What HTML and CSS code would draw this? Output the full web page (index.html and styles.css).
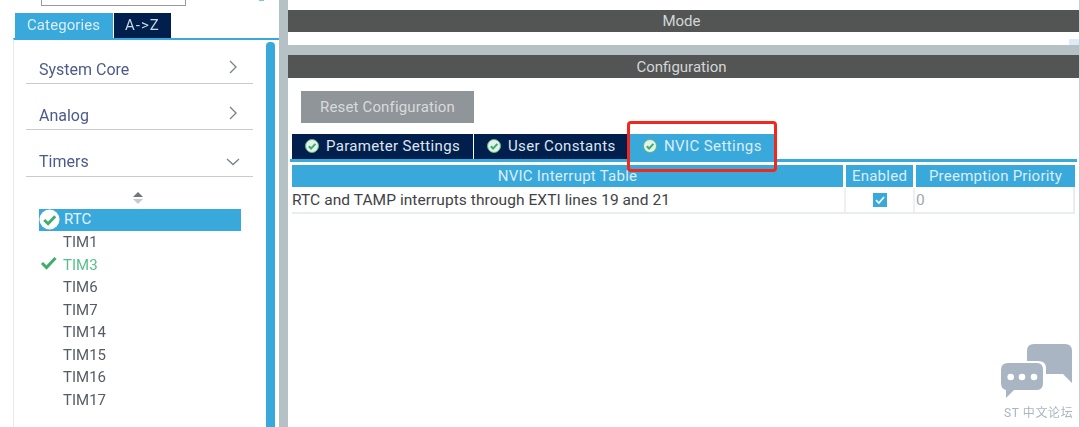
FILE: index.html
```html
<!DOCTYPE html>
<html lang="en">
<head>
<meta charset="utf-8">
<title>NVIC Settings</title>
<link rel="stylesheet" href="styles.css">
</head>
<body>
<div class="app">
  <aside class="left">
    <div class="search-row"><div class="search"></div><div class="search-dot"></div></div>
    <div class="cat-tabs">
      <div class="cat-tab active">Categories</div>
      <div class="cat-tab az">A-&gt;Z</div>
    </div>
    <div class="cat-body">
      <div class="cat-list">
        <div class="cat"><span>System Core</span><svg class="chev" width="12" height="14" viewBox="0 0 12 14"><path d="M3 1 9 7 3 13" /></svg></div>
        <div class="cat"><span>Analog</span><svg class="chev" width="12" height="14" viewBox="0 0 12 14"><path d="M3 1 9 7 3 13" /></svg></div>
        <div class="cat"><span>Timers</span><svg class="chev down" width="14" height="12" viewBox="0 0 14 12"><path d="M1 3 7 8.5 13 3" /></svg></div>
        <div class="sort"><svg width="10" height="15" viewBox="0 0 10 15"><path class="up" d="M5 1 10 6H0z"/><path class="dn" d="M0 8H10L5 13z"/></svg></div>
        <ul class="items">
          <li class="item selected"><svg class="ic" width="21" height="21" viewBox="0 0 22 22"><circle cx="11" cy="11" r="10.5" fill="#fff"/><path d="M5.5 11.5 9.5 15.5 17 7.5" fill="none" stroke="#3fae6b" stroke-width="3"/></svg><span>RTC</span></li>
          <li class="item">TIM1</li>
          <li class="item ok"><svg class="ic" width="18" height="14" viewBox="0 0 18 14"><path d="M2 7 6.5 11.5 15.5 2" fill="none" stroke="#3fae6b" stroke-width="3"/></svg><span>TIM3</span></li>
          <li class="item">TIM6</li>
          <li class="item">TIM7</li>
          <li class="item">TIM14</li>
          <li class="item">TIM15</li>
          <li class="item">TIM16</li>
          <li class="item">TIM17</li>
        </ul>
      </div>
      <div class="scroll"></div>
    </div>
  </aside>
  <main class="right">
    <div class="mode-wrap">
      <div class="bar mode">Mode</div>
      <div class="chip"></div>
    </div>
    <div class="config">
      <div class="bar">Configuration</div>
      <button class="reset">Reset Configuration</button>
      <div class="tabs">
        <div class="tab param"><svg class="tick" width="14" height="14" viewBox="0 0 14 14"><circle cx="7" cy="7" r="6.5" fill="#e4f2ea"/><circle cx="7" cy="7" r="6.5" fill="none" stroke="#58b780" stroke-width="1"/><path d="M3.8 7.2 6.1 9.5 10.4 4.9" fill="none" stroke="#3fae6b" stroke-width="2"/></svg><span>Parameter Settings</span></div>
        <div class="tab user"><svg class="tick" width="14" height="14" viewBox="0 0 14 14"><circle cx="7" cy="7" r="6.5" fill="#e4f2ea"/><circle cx="7" cy="7" r="6.5" fill="none" stroke="#58b780" stroke-width="1"/><path d="M3.8 7.2 6.1 9.5 10.4 4.9" fill="none" stroke="#3fae6b" stroke-width="2"/></svg><span>User Constants</span></div>
        <div class="tab nvic"><svg class="tick" width="14" height="14" viewBox="0 0 14 14"><circle cx="7" cy="7" r="6.5" fill="#e4f2ea"/><circle cx="7" cy="7" r="6.5" fill="none" stroke="#58b780" stroke-width="1"/><path d="M3.8 7.2 6.1 9.5 10.4 4.9" fill="none" stroke="#3fae6b" stroke-width="2"/></svg><span>NVIC Settings</span></div>
      </div>
      <div class="table">
        <div class="th c1">NVIC Interrupt Table</div>
        <div class="th c2">Enabled</div>
        <div class="th c3">Preemption Priority</div>
        <div class="td c1">RTC and TAMP interrupts through EXTI lines 19 and 21</div>
        <div class="td c2"><span class="check"><svg width="14" height="14" viewBox="0 0 14 14"><path d="M3 7.2 5.9 10 11 4" fill="none" stroke="#fff" stroke-width="1.6"/></svg></span></div>
        <div class="td c3 zero">0</div>
      </div>
    </div>
  </main>
</div>
<div class="highlight"></div>
<div class="mark">
  <svg width="74" height="56" viewBox="0 0 74 56">
    <path fill="#a9b5c3" d="M26 17V7Q26 0 33 0H64Q71 0 71 7V39L62 30H45V24Q45 17 37 17Z"/>
    <path fill="#a9b5c3" d="M7 19H36Q42 19 42 26V39Q42 46 36 46H13L5 54V46Q0 45 0 39V26Q0 19 7 19Z"/>
    <circle cx="9.7" cy="33" r="3.3" fill="#fff"/><circle cx="21" cy="33" r="3.3" fill="#fff"/><circle cx="33" cy="33" r="3.3" fill="#fff"/>
  </svg>
  <div class="mark-text">ST 中文论坛</div>
</div>
</body>
</html>
```
FILE: styles.css
```css
* { box-sizing: border-box; }
html, body { margin: 0; height: 100%; }
body { width: 1080px; height: 427px; overflow: hidden; background: #fff; position: relative; font-family: Roboto, "Liberation Sans", "Noto Sans CJK SC", sans-serif; }
.app { display: flex; height: 427px; }
.app, .highlight, .mark { filter: blur(.4px); }

.left { width: 279px; flex: none; padding-left: 13px; }
.search-row { height: 13px; padding-left: 28px; display: flex; }
.search { width: 145px; height: 6px; border: 1px solid #9a9a9a; border-top: 0; background: #fff; }
.search-dot { width: 5px; height: 1px; margin-left: 73px; background: #7fc4e6; }
.cat-tabs { display: flex; height: 25px; padding-left: 2px; gap: 1px; }
.cat-tab { background: #001f4d; color: #c9d6e4; font-size: 15px; padding: 3px 11px 0; width: 57px; white-space: nowrap; }
.cat-tab.active { background: #39a9dc; color: #dcedf7; width: 98px; letter-spacing: .1px; padding-left: 12px; }
.cat-tab.az { letter-spacing: 1px; }
.cat-body { display: flex; height: 389px; border-top: 2px solid #39a9dc; border-left: 1px solid #e6ebee; }
.cat-list { width: 251px; padding-left: 12px; flex: none; }
.cat { width: 227px; height: 47px; padding: 0 14px 0 13px; border-bottom: 1px solid #c6ccd2; display: flex; align-items: flex-end; justify-content: space-between; color: #4c5b8c; font-size: 16px; line-height: 20px; }
.cat span { padding-bottom: 4px; }
.cat:first-child { height: 44px; }
.cat:first-child span { padding-bottom: 3px; }
.cat:nth-child(2) { height: 46px; }
.cat:nth-child(2) span { padding-bottom: 3px; }
.chev { margin-bottom: 9px; }
.chev path { fill: none; stroke: #77828c; stroke-width: 1.3; }
.chev.down { margin-right: -1px; margin-bottom: 8px; }
.sort { height: 31.5px; padding: 14px 0 0 107px; width: 227px; }
.sort svg { display: block; }
.up { fill: #6f7679; }
.dn { fill: #c6cacc; }
.items { list-style: none; margin: 0; padding: 0 0 0 13px; width: 214px; }
.item { height: 22.5px; line-height: 22px; font-size: 15px; color: #565b66; padding-left: 24px; display: flex; align-items: center; position: relative; }
.item .ic { position: absolute; left: 1px; top: 2px; }
.item.selected { background: #39a9dc; color: #e6f3fa; width: 202px; height: 22.5px; padding: 0 0 1px 25px; }
.item.selected .ic { top: 0; left: 0; }
.item.ok { color: #56c08a; }
.scroll { width: 9px; margin: 2px 0 0 1px; background: #39a9dc; border-radius: 4px 4px 0 0; }

.right { flex: 1; display: flex; flex-direction: column; background: #b6c1c6; padding-left: 9px; border-right: 1px solid #c9cfd3; }
.mode-wrap { height: 45px; background: #fff; padding-top: 10px; }
.bar { height: 22px; padding-right: 4px; background: #535454; color: #d4d7d8; font-size: 15px; line-height: 24px; text-align: center; }
.bar.mode { line-height: 22px; }
.chip { width: 10px; height: 6px; margin: 7px 0 0 auto; background: #dcebf5; }
.config { margin-top: 10px; flex: 1; background: #fff; }
.config .bar { height: 23px; }
.reset { display: block; margin: 13px 0 0 13px; width: 173px; height: 32px; border: 0; background: #8f9599; color: #d8dbdd; font: 15px Roboto, "Liberation Sans", sans-serif; letter-spacing: .15px; }
.tabs { display: flex; margin: 11px 2px 0 2px; padding-left: 2px; height: 28px; border-bottom: 3px solid #39a9dc; gap: 1px; }
.tab { height: 25px; background: #001f4d; color: #dfe6ee; font-size: 15px; display: flex; align-items: center; white-space: nowrap; padding: 0 0 1px 13px; }
.tick { margin-right: 7px; flex: none; }
.tab.param { width: 181px; letter-spacing: .33px; }
.tab.user { width: 154px; letter-spacing: .36px; }
.tab.nvic { width: 145px; margin-left: 1px; background: #39a9dc; color: #dcedf7; letter-spacing: .4px; }
.table { display: grid; grid-template-columns: 551px 67px 159px; column-gap: 3px; margin: 3px 0 0 4px; width: 783px; border-bottom: 2px solid #e9edef; border-right: 2px solid #e9edef; }
.th { height: 22px; background: #39a9dc; color: #dcedf7; font-size: 15px; line-height: 23px; text-align: center; letter-spacing: .25px; }
.td { height: 24px; font-size: 15.5px; line-height: 24px; color: #3f4347; white-space: nowrap; margin-top: 1px; letter-spacing: .06px; }
.td.c2 { display: flex; align-items: center; justify-content: center; box-shadow: -2px 0 0 #eef1f2, 2px 0 0 #eef1f2; }
.td.zero { color: #a4a9ad; }
.check { width: 14px; height: 14px; background: #39a9dc; display: block; }
.check svg { display: block; }

.highlight { position: absolute; left: 627px; top: 121px; width: 150px; height: 51px; border: 3px solid #f0281e; border-radius: 4px; }
.mark { position: absolute; left: 1001px; top: 344px; width: 79px; }
.mark svg { display: block; }
.mark-text { font-size: 12px; color: #a9b5c3; margin-top: 3px; margin-left: 3px; white-space: nowrap; letter-spacing: .6px; }
```
